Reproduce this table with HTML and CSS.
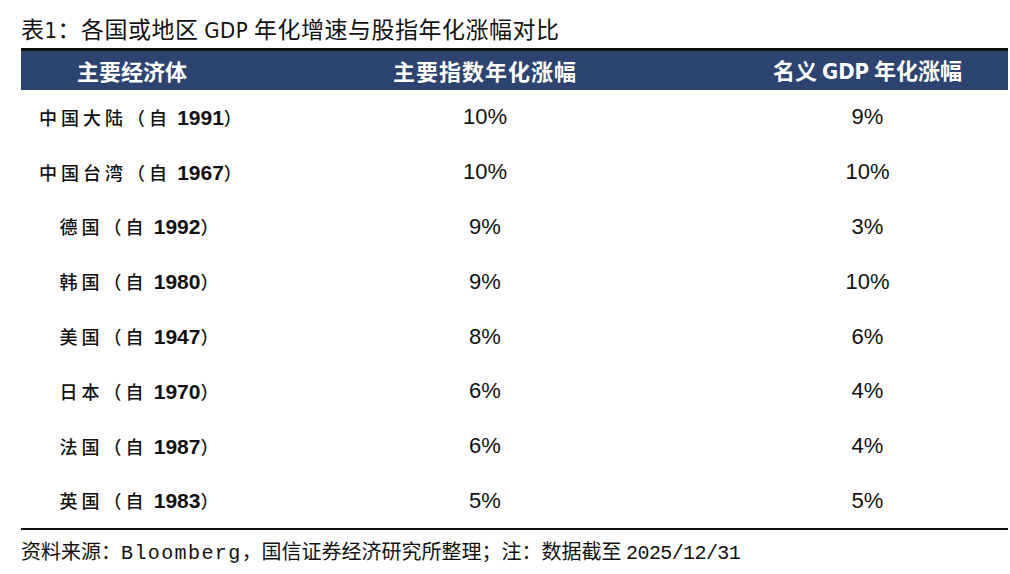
FILE: index.html
```html
<!DOCTYPE html>
<html lang="zh-CN">
<head>
<meta charset="utf-8">
<title>各国或地区 GDP 年化增速与股指年化涨幅对比</title>
<link rel="stylesheet" href="styles.css">
</head>
<body>
<div class="page">
  <h1 class="title">表<span class="lat">1</span>：各国或地区 <span class="lat">GDP</span> 年化增速与股指年化涨幅对比</h1>
  <table class="tbl">
    <colgroup>
      <col class="c1"><col class="c2"><col class="c3">
    </colgroup>
    <thead>
      <tr>
        <th>主要经济体</th>
        <th class="wide">主要指数年化涨幅</th>
        <th>名义 <span class="hlat">GDP</span> 年化涨幅</th>
      </tr>
    </thead>
    <tbody>
      <tr><td class="name"><span class="cn">中国大陆（自</span> <span class="yr">1991</span><span class="cn">）</span></td><td>10%</td><td>9%</td></tr>
      <tr><td class="name"><span class="cn">中国台湾（自</span> <span class="yr">1967</span><span class="cn">）</span></td><td>10%</td><td>10%</td></tr>
      <tr><td class="name"><span class="cn">德国（自</span> <span class="yr">1992</span><span class="cn">）</span></td><td>9%</td><td>3%</td></tr>
      <tr><td class="name"><span class="cn">韩国（自</span> <span class="yr">1980</span><span class="cn">）</span></td><td>9%</td><td>10%</td></tr>
      <tr><td class="name"><span class="cn">美国（自</span> <span class="yr">1947</span><span class="cn">）</span></td><td>8%</td><td>6%</td></tr>
      <tr><td class="name"><span class="cn">日本（自</span> <span class="yr">1970</span><span class="cn">）</span></td><td>6%</td><td>4%</td></tr>
      <tr><td class="name"><span class="cn">法国（自</span> <span class="yr">1987</span><span class="cn">）</span></td><td>6%</td><td>4%</td></tr>
      <tr><td class="name"><span class="cn">英国（自</span> <span class="yr">1983</span><span class="cn">）</span></td><td>5%</td><td>5%</td></tr>
    </tbody>
  </table>
  <p class="source">资料来源：<span class="mono">Bloomberg</span>，国信证券经济研究所整理；注：数据截至 <span class="mono date">2025/12/31</span></p>
</div>
</body>
</html>
```

FILE: styles.css
```css
html, body {
  margin: 0;
  padding: 0;
  background: #ffffff;
}

body {
  font-family: "Noto Sans CJK SC", "Liberation Sans", sans-serif;
  color: #111111;
}

.page {
  width: 987px;
  padding: 0 0 0 21px;
}

.title {
  margin: 0;
  height: 48px;
  box-sizing: border-box;
  padding-top: 13px;
  font-size: 23px;
  line-height: 30px;
  font-weight: 400;
  letter-spacing: 0.5px;
  white-space: nowrap;
}

.lat {
  font-family: "Liberation Sans Narrow", "DejaVu Sans Condensed", "Liberation Sans", sans-serif;
  font-size: 22px;
}

.tbl {
  width: 987px;
  border-collapse: collapse;
  table-layout: fixed;
  border-top: 3px solid #111111;
  border-bottom: 2px solid #111111;
}

.c1 { width: 222px; }
.c2 { width: 484px; }
.c3 { width: 281px; }

.tbl th {
  background: #2e4470;
  color: #ffffff;
  height: 37px;
  padding: 0;
  font-size: 22px;
  font-weight: 700;
  line-height: 37px;
  text-align: center;
  white-space: nowrap;
}

.tbl th.wide {
  letter-spacing: 1px;
}

.hlat {
  font-family: "Liberation Sans Narrow", "DejaVu Sans Condensed", "Liberation Sans", sans-serif;
  font-weight: 700;
}

.tbl td {
  height: 54.8px;
  padding: 0;
  text-align: center;
  vertical-align: middle;
  font-family: "Liberation Sans", Arial, sans-serif;
  font-size: 22px;
  line-height: 26px;
  color: #111111;
}

.tbl td.name {
  padding-left: 18px;
  white-space: nowrap;
}

.cn {
  font-family: "Noto Sans CJK SC", sans-serif;
  font-size: 18px;
  font-weight: 500;
  letter-spacing: 4px;
}

.yr {
  font-family: "Liberation Sans", Arial, sans-serif;
  font-size: 21px;
  font-weight: 700;
}

.source {
  margin: 0;
  padding-top: 9px;
  font-size: 20px;
  line-height: 24px;
  white-space: nowrap;
}

.mono {
  font-family: "Liberation Mono", monospace;
  font-size: 20px;
  letter-spacing: 1.4px;
}

.mono.date {
  letter-spacing: -0.6px;
}
```
